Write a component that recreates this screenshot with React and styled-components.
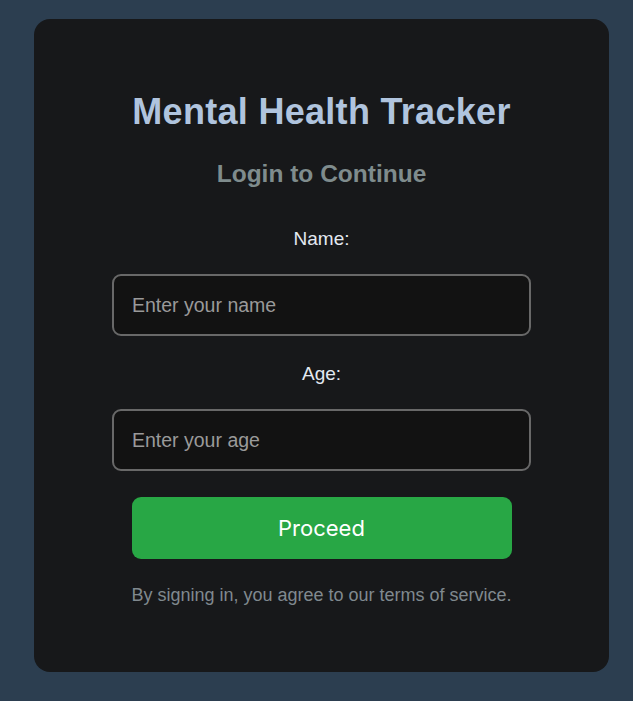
import React, { useState } from "react";
import styled, { createGlobalStyle } from "styled-components";

const GlobalStyle = createGlobalStyle`
  html, body {
    margin: 0;
    padding: 0;
    background: #2c3e50;
  }
  body {
    font-family: "Liberation Sans", Arial, sans-serif;
  }
`;

const Page = styled.div`
  min-height: 701px;
  padding: 19px 24px 29px 34px;
  box-sizing: border-box;
`;

const Card = styled.div`
  width: 575px;
  height: 653px;
  box-sizing: border-box;
  background: #17181a;
  border-radius: 16px;
  padding: 71px 78px 0;
  display: flex;
  flex-direction: column;
  align-items: center;
`;

const Title = styled.h1`
  margin: 0;
  font-size: 36px;
  font-weight: 700;
  letter-spacing: 0.3px;
  color: #b0c4de;
  line-height: 1.2;
`;

const Subtitle = styled.h2`
  margin: 26px 0 0;
  font-size: 24.5px;
  font-weight: 700;
  color: #7f8c8d;
  line-height: 1.2;
`;

const Form = styled.form`
  width: 100%;
  display: flex;
  flex-direction: column;
  align-items: center;
  margin-top: 39.5px;
`;

const Label = styled.label`
  font-size: 19px;
  color: #e3e9f1;
  line-height: 22px;
  margin-bottom: 24px;
`;

const Input = styled.input`
  width: 100%;
  height: 62px;
  box-sizing: border-box;
  padding: 0 18px;
  border: 2px solid #686868;
  border-radius: 9px;
  background: #121212;
  color: #ddd;
  font-family: "Liberation Sans", Arial, sans-serif;
  font-size: 19.5px;
  outline: none;
  margin-bottom: ${p => p.$gap}px;

  &::placeholder {
    color: #9a9a9a;
  }
`;

const Button = styled.button`
  width: 380px;
  height: 62px;
  border: none;
  border-radius: 9px;
  background: #28a745;
  color: #fff;
  font-family: Inter, "Liberation Sans", sans-serif;
  font-size: 22px;
  cursor: pointer;
`;

const Note = styled.p`
  margin: 25px 0 0;
  font-size: 18px;
  line-height: 22px;
  color: #80898f;
`;

export default function App() {
  const [name, setName] = useState("");
  const [age, setAge] = useState("");

  return (
    <>
      <GlobalStyle />
      <Page>
        <Card>
          <Title>Mental Health Tracker</Title>
          <Subtitle>Login to Continue</Subtitle>
          <Form onSubmit={e => e.preventDefault()}>
            <Label htmlFor="name">Name:</Label>
            <Input
              id="name"
              $gap={27}
              placeholder="Enter your name"
              value={name}
              onChange={e => setName(e.target.value)}
            />
            <Label htmlFor="age">Age:</Label>
            <Input
              id="age"
              $gap={26}
              placeholder="Enter your age"
              value={age}
              onChange={e => setAge(e.target.value)}
            />
            <Button type="submit">Proceed</Button>
          </Form>
          <Note>By signing in, you agree to our terms of service.</Note>
        </Card>
      </Page>
    </>
  );
}
